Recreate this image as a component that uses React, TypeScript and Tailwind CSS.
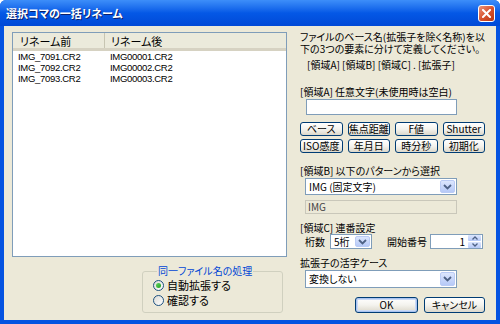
import React from "react";

const font = "font-['Noto_Sans_CJK_JP',sans-serif] [font-feature-settings:'palt']";

function Chevron() {
  return (
    <svg width="9" height="6" viewBox="0 0 9 6">
      <path d="M1 1l3.5 3.5L8 1" fill="none" stroke="#4d6185" strokeWidth="1.8" />
    </svg>
  );
}

function Select({ value, className }: { value: string; className: string }) {
  return (
    <div
      className={`flex items-center bg-white border border-[#7f9db9] pl-[3px] pr-[1px] ${className}`}
    >
      <span className="flex-1 text-[10px] leading-[12px] text-black whitespace-nowrap">
        {value}
      </span>
      <div className="w-[15px] h-[calc(100%-2px)] rounded-[2px] border border-[#bacbf5] bg-gradient-to-b from-[#dce6fd] to-[#b6c9f7] flex items-center justify-center">
        <Chevron />
      </div>
    </div>
  );
}

function XpButton({ label, className = "", focused = false }: { label: string; className?: string; focused?: boolean }) {
  return (
    <div
      className={`flex items-center justify-center rounded-[3px] border border-[#003c74] bg-gradient-to-b from-[#ffffff] via-[#f4f3ee] to-[#dcd8cb] text-[10px] leading-[12px] text-black whitespace-nowrap ${
        focused ? "shadow-[inset_0_0_0_1px_#a9c3f0,inset_0_0_0_2px_#cbdaf5]" : ""
      } ${className}`}
    >
      {label}
    </div>
  );
}

function Radio({ checked, label }: { checked?: boolean; label: string }) {
  return (
    <div className="flex items-center h-[12px] gap-[3px]">
      <div className="w-[11px] h-[11px] rounded-full border border-[#1c5180] bg-gradient-to-br from-[#dcdbd5] to-white flex items-center justify-center">
        {checked && <div className="w-[5px] h-[5px] rounded-full bg-gradient-to-br from-[#5fd65f] to-[#1d9e1d]" />}
      </div>
      <span className="text-[11px] leading-[12px] text-black">{label}</span>
    </div>
  );
}

const files = [
  ["IMG_7091.CR2", "IMG00001.CR2"],
  ["IMG_7092.CR2", "IMG00002.CR2"],
  ["IMG_7093.CR2", "IMG00003.CR2"],
];

export default function App() {
  return (
    <div className={`w-[500px] h-[324px] flex flex-col bg-[#0553e1] rounded-t-[6px] overflow-hidden ${font}`}>
      {/* title bar */}
      <div className="h-[26px] flex items-center pl-[6px] pr-[5px] bg-gradient-to-b from-[#3d8ef9] via-[#0458e6] to-[#0149d6]">
        <span className="flex-1 text-white text-[11px] font-bold leading-[14px] [text-shadow:1px_1px_0_#0a1f6b]">
          選択コマの一括リネーム
        </span>
        <div className="w-[17px] h-[17px] rounded-[3px] border border-white bg-gradient-to-br from-[#e9937a] via-[#d8532e] to-[#b8350f] flex items-center justify-center">
          <svg width="9" height="9" viewBox="0 0 9 9">
            <path d="M1 1l7 7M8 1l-7 7" stroke="white" strokeWidth="2" strokeLinecap="square" />
          </svg>
        </div>
      </div>

      <div className="flex-1 mx-[4px] mb-[4px] bg-[#ece9d8] flex text-black">
        {/* left column */}
        <div className="pl-[8px] pt-[6px] flex flex-col">
          <div className="w-[275px] h-[225px] bg-white border border-[#7f9db9] flex flex-col">
            <div className="h-[18px] flex bg-[#ebeadb] border-b-[3px] border-[#d6d2c2] text-[11px] leading-[15px]">
              <div className="w-[92px] pl-[7px] pt-[1px] border-r border-[#c7c5b2]">リネーム前</div>
              <div className="flex-1 pl-[6px] pt-[1px]">リネーム後</div>
            </div>
            <div className="font-['Liberation_Sans',sans-serif]">
              {files.map(([a, b]) => (
                <div key={a} className="flex h-[11px] items-center text-[9.5px] leading-[11px] tracking-[-0.3px]">
                  <div className="w-[91px] pl-[5px]">{a}</div>
                  <div className="flex-1 pl-[6px]">{b}</div>
                </div>
              ))}
            </div>
          </div>

          <fieldset className="ml-[130px] mt-[8px] w-[141px] border border-[#d0d0bf] rounded-[3px] pl-[10px] pb-[6px]">
            <legend className="ml-[4px] px-[1px] text-[10px] leading-[12px] text-[#0046d5]">
              同一ファイル名の処理
            </legend>
            <div className="pt-[2px] flex flex-col gap-[3px]">
              <Radio checked label="自動拡張する" />
              <Radio label="確認する" />
            </div>
          </fieldset>
        </div>

        {/* right column */}
        <div className="ml-[13px] w-[185px] pt-[5px] flex flex-col text-[10px]">
          <p className="leading-[12px] whitespace-nowrap">ファイルのベース名(拡張子を除く名称)を以</p>
          <p className="leading-[11px] whitespace-nowrap">下の3つの要素に分けて定義してください。</p>
          <p className="mt-[5px] pl-[7px] leading-[12px] whitespace-nowrap">
            [領域A] [領域B] [領域C] . [拡張子]
          </p>
          <p className="mt-[15px] leading-[12px] whitespace-nowrap">[領域A] 任意文字(未使用時は空白)</p>
          <div className="mt-[1px] ml-[6px] w-[151px] h-[16px] bg-white border border-[#7f9db9]" />

          <div className="mt-[7px] grid grid-cols-4 gap-x-[5px] gap-y-[3px]">
            {["ベース", "焦点距離", "F値", "Shutter", "ISO感度", "年月日", "時分秒", "初期化"].map((l) => (
              <XpButton key={l} label={l} className="h-[14px]" />
            ))}
          </div>

          <p className="mt-[12px] leading-[12px] whitespace-nowrap">[領域B] 以下のパターンから選択</p>
          <Select value="IMG (固定文字)" className="mt-[1px] ml-[5px] w-[152px] h-[17px]" />
          <div className="mt-[5px] ml-[5px] w-[152px] h-[14px] border border-[#c9c7ba] bg-[#ece9d8] pl-[2px] text-[10px] leading-[12px] text-[#444]">
            IMG
          </div>

          <p className="mt-[8px] leading-[12px] whitespace-nowrap">[領域C] 連番設定</p>
          <div className="flex items-center h-[15px] pl-[5px] whitespace-nowrap">
            <span className="shrink-0 leading-[12px]">桁数</span>
            <Select value="5桁" className="shrink-0 ml-[5px] w-[42px] h-[15px]" />
            <span className="shrink-0 ml-[15px] leading-[12px]">開始番号</span>
            <div className="shrink-0 ml-[3px] w-[53px] h-[15px] bg-white border border-[#7f9db9] flex items-center pr-[1px]">
              <span className="flex-1 text-right pr-[3px] leading-[12px]">1</span>
              <div className="w-[13px] h-[13px] flex flex-col gap-[1px]">
                <div className="flex-1 rounded-[1px] bg-gradient-to-b from-[#dce6fd] to-[#b6c9f7] flex items-center justify-center">
                  <svg width="6" height="4" viewBox="0 0 6 4">
                    <path d="M0.5 3.5L3 1l2.5 2.5" fill="none" stroke="#4d6185" strokeWidth="1.3" />
                  </svg>
                </div>
                <div className="flex-1 rounded-[1px] bg-gradient-to-b from-[#dce6fd] to-[#b6c9f7] flex items-center justify-center">
                  <svg width="6" height="4" viewBox="0 0 6 4">
                    <path d="M0.5 0.5L3 3l2.5-2.5" fill="none" stroke="#4d6185" strokeWidth="1.3" />
                  </svg>
                </div>
              </div>
            </div>
          </div>

          <p className="mt-[8px] leading-[12px] whitespace-nowrap">拡張子の活字ケース</p>
          <Select value="変換しない" className="mt-[1px] ml-[5px] w-[152px] h-[18px]" />

          <div className="mt-[9px] flex justify-end gap-[6px]">
            <XpButton label="OK" focused className="w-[63px] h-[16px]" />
            <XpButton label="キャンセル" className="w-[61px] h-[16px]" />
          </div>
        </div>
      </div>
    </div>
  );
}
